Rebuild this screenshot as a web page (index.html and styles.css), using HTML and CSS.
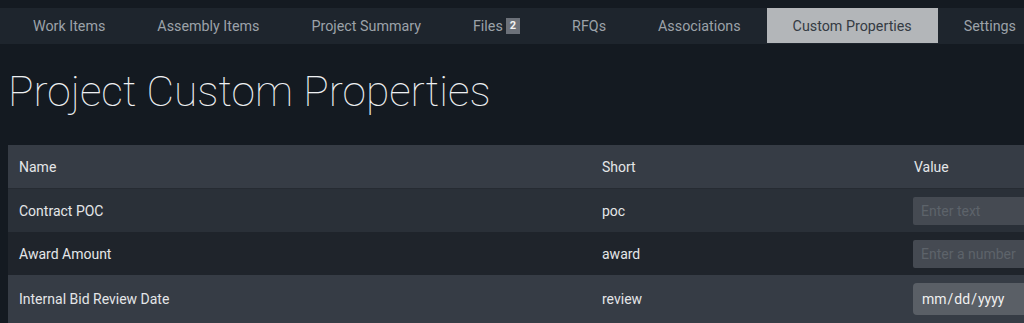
FILE: index.html
```html
<!DOCTYPE html>
<html lang="en">
<head>
    <meta charset="UTF-8">
    <meta name="viewport" content="width=device-width, initial-scale=1.0">
    <title>Project Custom Properties</title>
    <link rel="stylesheet" href="styles.css">
</head>
<body>
    <nav class="tabs">
        <a class="tab">Work Items</a>
        <a class="tab">Assembly Items</a>
        <a class="tab">Project Summary</a>
        <a class="tab">Files <span class="badge">2</span></a>
        <a class="tab">RFQs</a>
        <a class="tab">Associations</a>
        <a class="tab active">Custom Properties</a>
        <a class="tab">Settings</a>
    </nav>

    <h1 class="page-title">Project Custom Properties</h1>

    <div class="props-table">
        <div class="row head">
            <div class="cell">Name</div>
            <div class="cell">Short</div>
            <div class="cell">Value</div>
        </div>
        <div class="row odd">
            <div class="cell">Contract POC</div>
            <div class="cell">poc</div>
            <div class="cell value"><input type="text" class="field" placeholder="Enter text"></div>
        </div>
        <div class="row even">
            <div class="cell">Award Amount</div>
            <div class="cell">award</div>
            <div class="cell value"><input type="text" class="field" placeholder="Enter a number"></div>
        </div>
        <div class="row tall">
            <div class="cell">Internal Bid Review Date</div>
            <div class="cell">review</div>
            <div class="cell value"><input type="date" class="field date"></div>
        </div>
    </div>
</body>
</html>
```

FILE: styles.css
```css
html, body {
    overflow: hidden;
}
body {
    margin: 0;
    padding-top: 8px;
    background-color: #141a21;
    font-family: Roboto, "Liberation Sans", sans-serif;
    color: #e4e6e8;
}
.tabs {
    display: flex;
    height: 36px;
    padding-left: 7px;
    background-color: #1e252d;
}
.tab {
    display: flex;
    align-items: center;
    gap: 3px;
    padding: 0 26px;
    font-size: 14.3px;
    color: #9ca2a9;
    white-space: nowrap;
}
.tab.active {
    background-color: #b3b6b9;
    color: #353b43;
    height: 35px;
}
.badge {
    display: inline-block;
    background-color: #6c7179;
    color: #f2f2f2;
    font-size: 11px;
    font-weight: bold;
    padding: 1px 4px;
    line-height: 14px;
}
.page-title {
    margin: 24px 0 29px 8px;
    font-size: 42.5px;
    font-weight: 100;
    line-height: 48px;
    color: #eef0f2;
}
.props-table {
    margin-left: 8px;
    width: 1120px;
    font-size: 14px;
}
.row {
    display: grid;
    grid-template-columns: 583px 312px 1fr;
    align-items: center;
}
.cell {
    padding-left: 11px;
}
.cell.value {
    padding-left: 10px;
}
.row.head {
    height: 43px;
    background-color: #363c45;
    border-bottom: 1px solid #262b32;
}
.row.odd {
    height: 43px;
    background-color: #2a3038;
}
.row.even {
    height: 43px;
    background-color: #1f242b;
}
.row.tall {
    height: 48px;
    background-color: #363c45;
}
.field {
    width: 150px;
    height: 28px;
    box-sizing: border-box;
    border: none;
    border-radius: 2px;
    padding: 0 8px;
    background-color: #454a52;
    color: #e4e6e8;
    font-family: Roboto, "Liberation Sans", sans-serif;
    font-size: 14px;
    outline: none;
}
.field::placeholder {
    color: #5d636a;
}
.field.date {
    height: 32px;
    border-radius: 4px;
    background-color: #5a5f66;
    font-size: 14px;
    color: #f0f0f0;
}
```
